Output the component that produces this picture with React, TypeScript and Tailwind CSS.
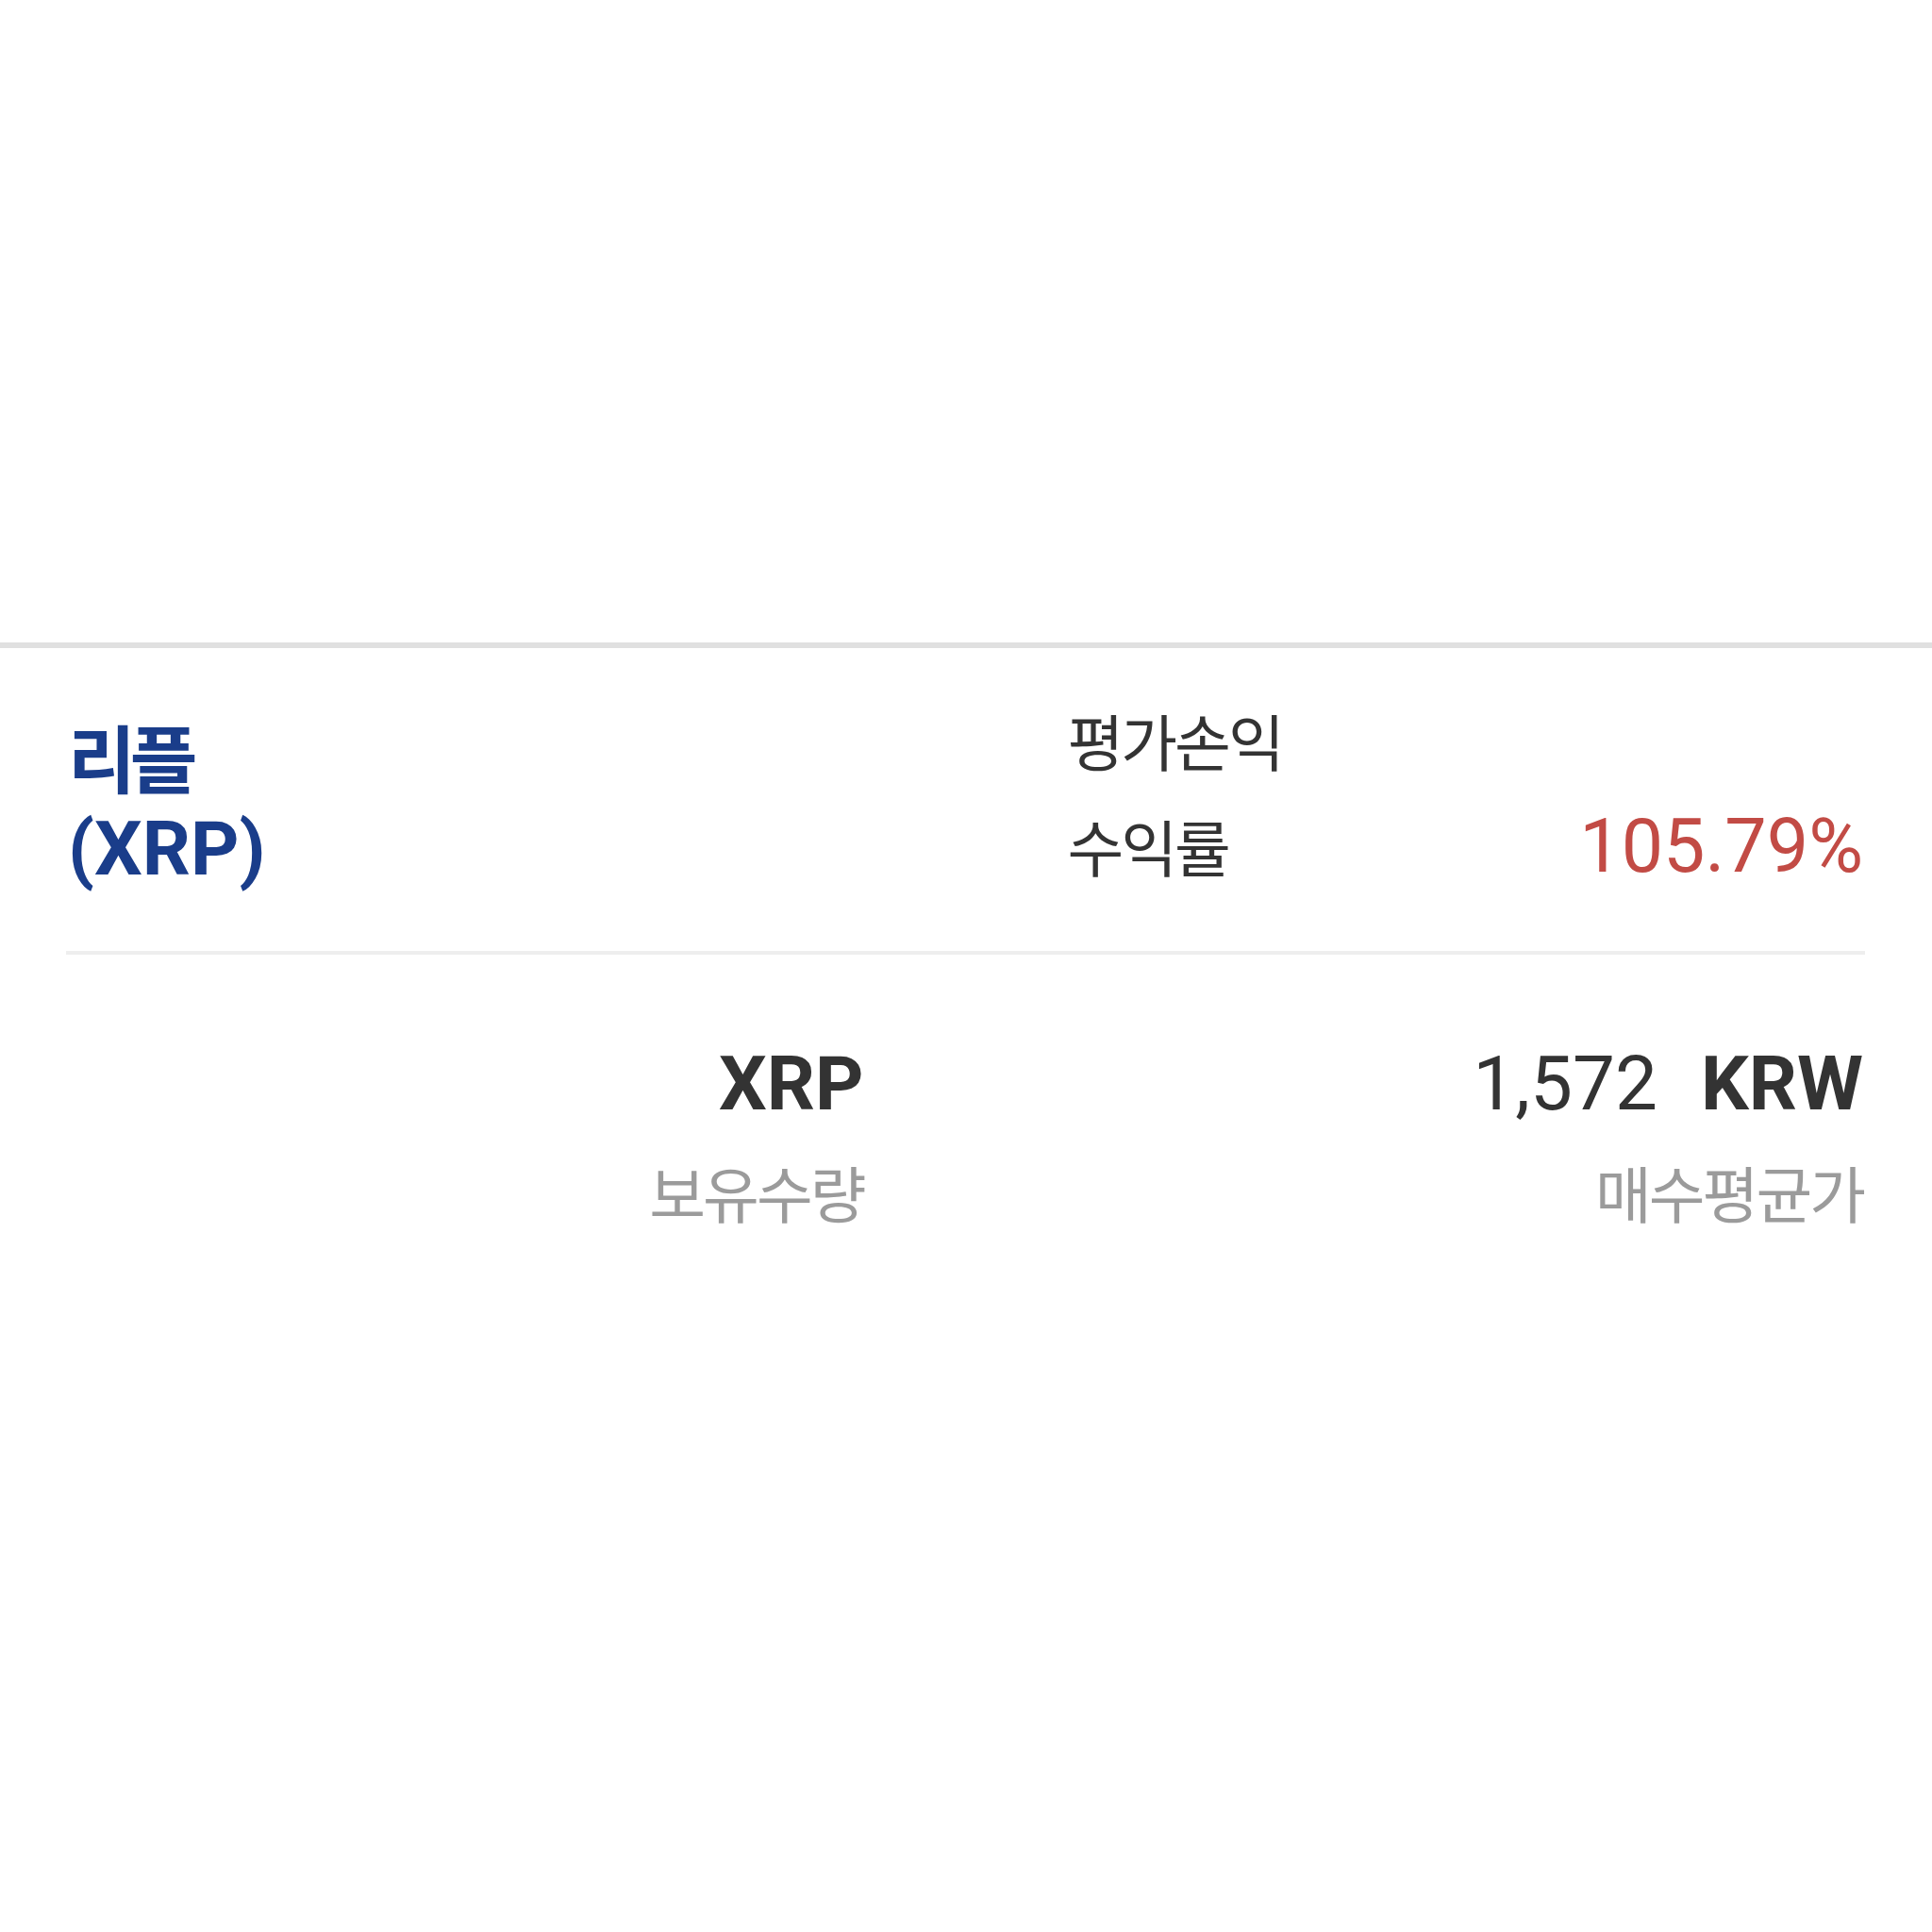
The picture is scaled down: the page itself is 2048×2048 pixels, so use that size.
const ko = "font-['Noto_Sans_CJK_KR','Noto_Sans',sans-serif]";
const num = "font-['Roboto','Liberation_Sans',sans-serif]";

export default function App() {
  return (
    <div className="min-h-screen w-full bg-white">
      <div className="h-[681px]" />

      <div className="border-t-[6px] border-[#e0e0e0] pl-[72px] pr-[73px]">
        {/* coin name + profit */}
        <div className="grid grid-cols-2 gap-x-[216px] pt-[42px] pb-[55px]">
          <div className="mt-[22px] text-[#1a3d8a] font-bold">
            <div className={`${ko} text-[78px] leading-[100px] tracking-[-6px]`}>리플</div>
            <div className={`${num} text-[80px] leading-[98px]`}>(XRP)</div>
          </div>

          <div className="flex flex-col">
            <div className="flex h-[112px] items-center justify-between">
              <span className={`${ko} text-[65px] tracking-[-3px] text-[#333333]`}>평가손익</span>
              <span />
            </div>
            <div className="flex h-[112px] items-center justify-between">
              <span className={`${ko} text-[65px] tracking-[-3px] text-[#333333]`}>수익률</span>
              <span className={`${num} text-[79px] text-[#c24b45]`}>105.79%</span>
            </div>
          </div>
        </div>

        <div className="-ml-[2px] -mr-[2px] h-[4px] bg-[#eeeeee]" />

        {/* holdings */}
        <div className="grid grid-cols-2 gap-x-[216px] pt-[87px]">
          <div className="flex flex-col items-end">
            <div className={`${num} text-[80px] font-bold leading-[100px] text-[#333333]`}>XRP</div>
            <div className={`${ko} mt-[14px] text-[65px] leading-[100px] tracking-[-3px] text-[#9b9b9b]`}>보유수량</div>
          </div>
          <div className="flex flex-col items-end">
            <div className={`${num} flex text-[80px] leading-[100px] text-[#333333]`}>
              <span>1,572</span>
              <span className="ml-[46px] font-bold">KRW</span>
            </div>
            <div className={`${ko} mt-[14px] text-[65px] leading-[100px] tracking-[-3px] text-[#9b9b9b]`}>매수평균가</div>
          </div>
        </div>
      </div>
    </div>
  );
}
